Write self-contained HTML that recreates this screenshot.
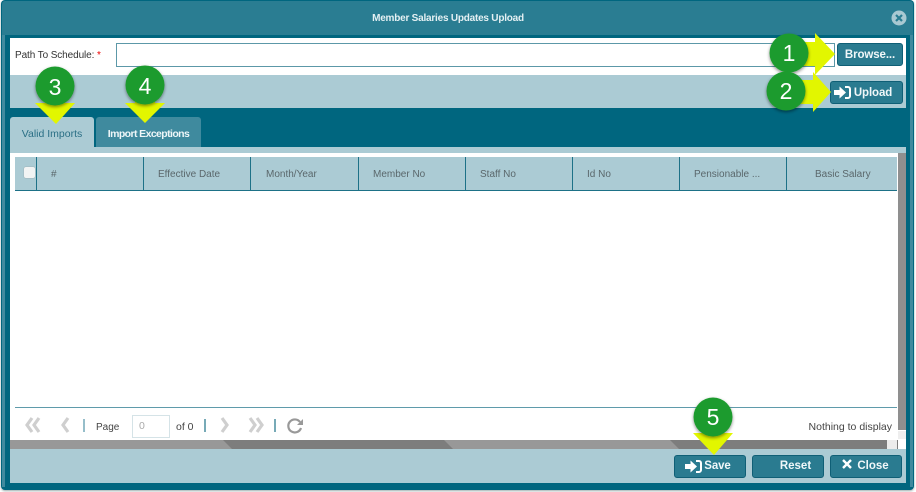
<!DOCTYPE html>
<html><head><meta charset="utf-8"><style>
html,body{margin:0;padding:0;background:#fff}
body{width:916px;height:492px;position:relative;overflow:hidden;font-family:"Liberation Sans",sans-serif;font-size:10.5px}
.a{position:absolute}
.t{position:absolute;white-space:nowrap;line-height:14px}
.b{position:absolute;box-sizing:border-box;background:#2a7b90;border:1px solid #0f5f76;border-radius:3px;color:#f0f7f9;font-weight:bold;font-size:11.5px;line-height:21px;text-align:center}
.h{position:absolute;top:157px;height:33px;line-height:36px;background:#abcbd4;color:#5a676b;font-size:10px;text-align:center;box-sizing:border-box;border-right:1px solid #1d7187}
</style></head><body>
<div class="a" style="left:1px;top:0;width:913px;height:490px;background:#00667f;border-radius:4px;box-shadow:0 1px 2px #9aa"></div>
<div class="a" style="left:2px;top:1px;width:911px;height:34px;background:#2a7d92;border-radius:3px 3px 0 0"></div>
<div class="a" style="left:2px;top:35px;width:3px;height:452px;background:#3f8a9e"></div>
<div class="a" style="left:910px;top:35px;width:3px;height:452px;background:#3f8a9e"></div>
<div class="t" style="left:0;width:896px;text-align:center;top:12px;color:#e4f0f3;font-weight:bold;font-size:10px;letter-spacing:-.22px">Member Salaries Updates Upload</div>
<svg class="a" style="left:891px;top:10px" width="16" height="16"><circle cx="8" cy="8" r="7.5" fill="#a9c9d2"/><path d="M5 5l6 6M11 5l-6 6" stroke="#2a7d92" stroke-width="2.2"/></svg>

<div class="a" style="left:10px;top:38px;width:896px;height:37px;background:#fff"></div>
<div class="t" style="left:15px;top:49px;color:#333;font-size:10px;letter-spacing:-.1px">Path To Schedule: <span style="color:#e00">*</span></div>
<div class="a" style="left:116px;top:43px;width:717px;height:22px;border:1px solid #5c98a8;background:#fff"></div>
<div class="a" style="left:10px;top:75px;width:896px;height:33px;background:#abcbd4"></div>
<div class="b" style="left:837px;top:43px;width:66px;height:23px;line-height:22px;letter-spacing:-.1px">Browse...</div>
<div class="b" style="left:830px;top:81px;width:73px;height:23px;line-height:22px;padding-left:13px;letter-spacing:-.1px">Upload</div>
<svg class="a" style="left:834px;top:85px" width="18" height="15"><path d="M0 5h5.500V1.500L12 7.500l-6.500 6V10H0z" fill="#fff"/><path d="M11 2h3a2 2 0 0 1 2 2v7a2 2 0 0 1-2 2h-3" fill="none" stroke="#fff" stroke-width="2"/></svg>

<div class="a" style="left:10px;top:117px;width:84px;height:31px;background:#abcbd4;border-radius:3px 3px 0 0"></div>
<div class="t" style="left:10px;width:84px;text-align:center;top:127px;color:#2a6f85;font-size:10.5px">Valid Imports</div>
<div class="a" style="left:96px;top:117px;width:105px;height:30px;background:#3f8a9e;border-radius:3px 3px 0 0"></div>
<div class="t" style="left:96px;width:105px;text-align:center;top:127px;color:#eef6f8;font-size:10.5px;font-weight:bold;letter-spacing:-.6px">Import Exceptions</div>
<div class="a" style="left:10px;top:147px;width:896px;height:6px;background:#abcbd4"></div>
<div class="a" style="left:10px;top:153px;width:888px;height:287px;background:#fff"></div>
<div class="a" style="left:15px;top:190px;width:882px;height:1px;background:#1d7187"></div>

<div class="h" style="left:15px;width:22px"></div>
<div class="a" style="left:24px;top:167px;width:11px;height:11px;background:#f2f4f4;border-radius:2px;box-shadow:0 0 1px #888"></div>
<div class="h" style="left:37px;width:107px;text-align:left;padding-left:14px">#</div>
<div class="h" style="left:144px;width:107px;text-align:left;padding-left:14px">Effective Date</div>
<div class="h" style="left:251px;width:108px;text-align:left;padding-left:15px">Month/Year</div>
<div class="h" style="left:359px;width:107px;text-align:left;padding-left:14px">Member No</div>
<div class="h" style="left:466px;width:107px;text-align:left;padding-left:14px">Staff No</div>
<div class="h" style="left:573px;width:107px;text-align:left;padding-left:14px">Id No</div>
<div class="h" style="left:680px;width:107px;text-align:left;padding-left:14px">Pensionable ...</div>
<div class="h" style="left:787px;width:110px;border-right:0;text-align:left;padding-left:28px">Basic Salary</div>

<div class="a" style="left:898px;top:153px;width:8px;height:277px;background:#8f8f8f"></div>
<div class="a" style="left:898px;top:430px;width:8px;height:19px;background:#fff"></div>
<div class="a" style="left:898px;top:431px;width:8px;height:8px;background:#eee"></div>
<div class="a" style="left:15px;top:407px;width:882px;height:1px;background:#5f9bab"></div>

<svg class="a" style="left:24px;top:416px" width="300" height="20" fill="none">
<path d="M8 2L3 9l5 7M15 2l-5 7 5 7" stroke="#cfcfcf" stroke-width="3.200"/>
<path d="M44 2l-5 7 5 7" stroke="#cfcfcf" stroke-width="3.200"/>
<path d="M60 3v13" stroke="#4f93a6" stroke-width="1.200"/>
<path d="M181 3v13" stroke="#1d7187" stroke-width="1.200"/>
<path d="M198 2l5 7-5 7" stroke="#cfcfcf" stroke-width="3.200"/>
<path d="M226 2l5 7-5 7M233 2l5 7-5 7" stroke="#cfcfcf" stroke-width="3.200"/>
<path d="M251 3v13" stroke="#1d7187" stroke-width="1.200"/>
<path d="M276 6a6.500 6.500 0 1 0 1 6" stroke="#999" stroke-width="2.200"/>
<path d="M279 3v6h-6z" fill="#999"/>
</svg>
<div class="t" style="left:96px;top:421px;color:#444;font-size:10px">Page</div>
<div class="a" style="left:132px;top:415px;width:36px;height:21px;border:1px solid #d5e3e7;background:#fff;color:#aaa;line-height:21px;text-indent:6px">0</div>
<div class="t" style="left:176px;top:420px;color:#444">of 0</div>
<div class="t" style="right:24px;top:420px;color:#444">Nothing to display</div>

<div class="a" style="left:10px;top:440px;width:888px;height:9px;background:#7d7d7d"></div>
<svg class="a" style="left:10px;top:440px" width="888" height="9"><path d="M0 0H213l9 9H0zM434 0H660l9 9H443z" fill="#989898"/></svg>
<div class="a" style="left:887px;top:440px;width:10px;height:9px;background:#ececec"></div>

<div class="a" style="left:10px;top:449px;width:896px;height:34px;background:#abcbd4"></div>
<div class="b" style="left:674px;top:455px;width:72px;height:23px;padding-left:15px;letter-spacing:-.1px">Save</div>
<svg class="a" style="left:685px;top:459px" width="18" height="15"><path d="M0 5h5.500V1.500L12 7.500l-6.500 6V10H0z" fill="#fff"/><path d="M11 2h3a2 2 0 0 1 2 2v7a2 2 0 0 1-2 2h-3" fill="none" stroke="#fff" stroke-width="2"/></svg>
<div class="b" style="left:752px;top:455px;width:72px;height:23px;padding-left:15px">Reset</div>
<div class="b" style="left:830px;top:455px;width:72px;height:23px;padding-left:14px">Close</div>
<svg class="a" style="left:841px;top:458px" width="12" height="12"><path d="M2 2l8 8M10 2l-8 8" stroke="#fff" stroke-width="2.400"/></svg>

<svg class="a" style="left:0;top:0" width="916" height="492">
<defs><filter id="s" x="-30%" y="-30%" width="160%" height="160%"><feDropShadow dx="0" dy="1.500" stdDeviation="1.500" flood-color="#000" flood-opacity=".45"/></filter></defs>
<g fill="#e2f600">
<path d="M790 42h25V33l20 21-20 21V66h-25z"/>
<path d="M788 80h25V72l18 20-18 20v-8h-25z"/>
<path d="M45 90h20v13h10L56 124 35 103h10z"/>
<path d="M135 90h20v13h10l-20 20-20-20h10z"/>
<path d="M703 420h20v13h10l-19 22-21-22h10z"/>
</g>
<g fill="#1f9b2e" filter="url(#s)">
<circle cx="789" cy="53" r="19.500"/>
<circle cx="786" cy="91" r="19.500"/>
<circle cx="55" cy="86" r="19.500"/>
<circle cx="145" cy="85" r="19.500"/>
<circle cx="713" cy="417" r="19.500"/>
</g>
<g fill="#fff" font-family="Liberation Sans, sans-serif" font-size="23" text-anchor="middle">
<text x="789" y="61">1</text>
<text x="786" y="99">2</text>
<text x="55" y="95">3</text>
<text x="145" y="94">4</text>
<text x="713" y="425">5</text>
</g>
</svg>
</body></html>
